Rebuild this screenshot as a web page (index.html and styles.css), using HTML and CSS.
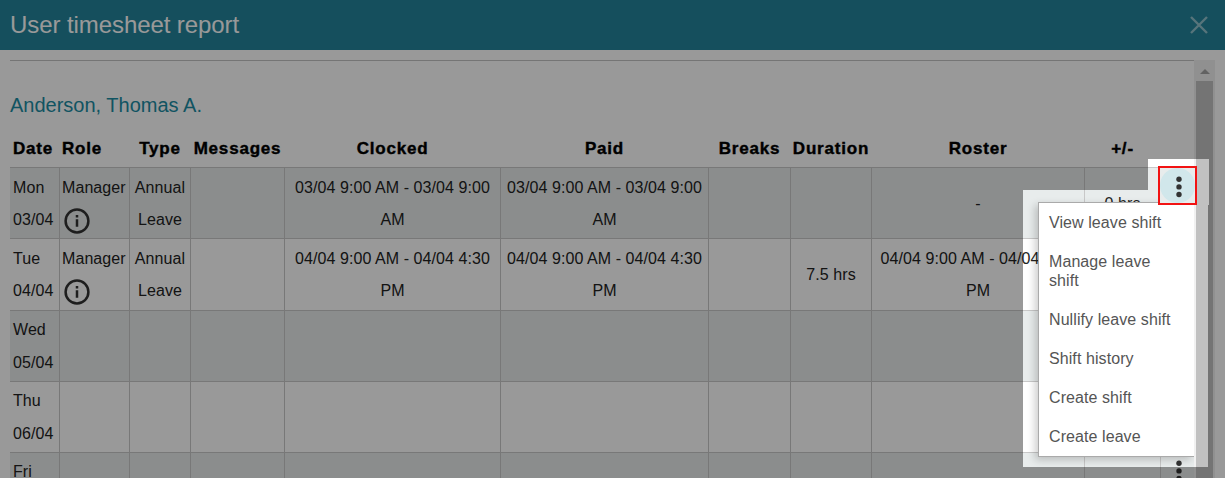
FILE: index.html
```
<!DOCTYPE html>
<html lang="en">
<head>
    <meta charset="UTF-8">
    <meta name="viewport" content="width=device-width, initial-scale=1.0">
    <title>User timesheet report</title>
    <link rel="stylesheet" href="styles.css">
</head>
<body>
    <header class="modal-header">
        <h1>User timesheet report</h1>
        <button class="close" aria-label="Close">
            <svg width="20" height="20" viewBox="0 0 20 20"><path d="M2 2L18 18M18 2L2 18"/></svg>
        </button>
    </header>
    <main class="modal-body">
        <div class="report">
            <h2>Anderson, Thomas A.</h2>
            <table>
                <colgroup>
                    <col class="c-date"><col class="c-role"><col class="c-type"><col class="c-messages">
                    <col class="c-clocked"><col class="c-paid"><col class="c-breaks"><col class="c-duration">
                    <col class="c-roster"><col class="c-diff"><col class="c-menu">
                </colgroup>
                <thead>
                    <tr>
                        <th class="left">Date</th>
                        <th class="left">Role</th>
                        <th>Type</th>
                        <th>Messages</th>
                        <th>Clocked</th>
                        <th>Paid</th>
                        <th>Breaks</th>
                        <th>Duration</th>
                        <th>Roster</th>
                        <th>+/-</th>
                        <th></th>
                    </tr>
                </thead>
                <tbody>
                    <tr>
                        <td class="left">Mon<br>03/04</td>
                        <td class="left">Manager<br><svg class="info" width="26" height="26" viewBox="0 0 26 26"><circle cx="13" cy="13" r="11.4"/><path d="M13 11.3V18.8M13 7V9.6"/></svg></td>
                        <td>Annual Leave</td>
                        <td></td>
                        <td>03/04 9:00 AM - 03/04 9:00 AM</td>
                        <td>03/04 9:00 AM - 03/04 9:00 AM</td>
                        <td></td>
                        <td></td>
                        <td>-</td>
                        <td>0 hrs</td>
                        <td class="actions">
                            <button class="more active" aria-label="Shift menu"><svg width="6" height="22" viewBox="0 0 6 22"><circle cx="3" cy="3.3" r="2.7"/><circle cx="3" cy="10.9" r="2.7"/><circle cx="3" cy="18.5" r="2.7"/></svg></button>
                            <ul class="menu">
                                <li>View leave shift</li>
                                <li>Manage leave shift</li>
                                <li>Nullify leave shift</li>
                                <li>Shift history</li>
                                <li>Create shift</li>
                                <li>Create leave</li>
                            </ul>
                        </td>
                    </tr>
                    <tr class="tall">
                        <td class="left">Tue<br>04/04</td>
                        <td class="left">Manager<br><svg class="info" width="26" height="26" viewBox="0 0 26 26"><circle cx="13" cy="13" r="11.4"/><path d="M13 11.3V18.8M13 7V9.6"/></svg></td>
                        <td>Annual Leave</td>
                        <td></td>
                        <td>04/04 9:00 AM - 04/04 4:30 PM</td>
                        <td>04/04 9:00 AM - 04/04 4:30 PM</td>
                        <td></td>
                        <td>7.5 hrs</td>
                        <td>04/04 9:00 AM - 04/04 4:30 PM</td>
                        <td></td>
                        <td></td>
                    </tr>
                    <tr class="empty">
                        <td class="left">Wed<br>05/04</td>
                        <td></td><td></td><td></td><td></td><td></td><td></td><td></td><td></td><td></td><td></td>
                    </tr>
                    <tr class="empty">
                        <td class="left">Thu<br>06/04</td>
                        <td></td><td></td><td></td><td></td><td></td><td></td><td></td><td></td><td></td><td></td>
                    </tr>
                    <tr class="empty">
                        <td class="left">Fri</td>
                        <td></td><td></td><td></td><td></td><td></td><td></td><td></td><td></td><td></td>
                        <td class="actions">
                            <button class="more" aria-label="Shift menu"><svg width="6" height="22" viewBox="0 0 6 22"><circle cx="3" cy="3.3" r="2.7"/><circle cx="3" cy="10.9" r="2.7"/><circle cx="3" cy="18.5" r="2.7"/></svg></button>
                        </td>
                    </tr>
                </tbody>
            </table>
        </div>
        <div class="scrollbar">
            <svg width="10" height="5" viewBox="0 0 10 5"><path d="M5 0L10 5H0Z"/></svg>
            <div class="thumb"></div>
        </div>
    </main>
    <div class="dim"></div>
</body>
</html>
```
FILE: styles.css
```
* {
    box-sizing: border-box;
}
body {
    margin: 0;
    height: 478px;
    overflow: hidden;
    display: flex;
    flex-direction: column;
    position: relative;
    background: #fff;
    color: #222;
    font: 16px/32px "Liberation Sans", Arial, sans-serif;
    letter-spacing: 0.08px;
}
button {
    padding: 0;
    border: none;
    background: none;
}
.modal-header {
    flex: none;
    height: 50px;
    padding: 0 16px 0 10px;
    display: flex;
    align-items: center;
    justify-content: space-between;
    background: #23849b;
    color: #fff;
}
.modal-header h1 {
    margin: 0;
    font-size: 24px;
    font-weight: normal;
    letter-spacing: -0.08px;
}
.close {
    height: 20px;
}
.close svg {
    display: block;
    fill: none;
    stroke: #91c1cd;
    stroke-width: 2.4;
}
.modal-body {
    flex: 1;
    min-height: 0;
    padding: 10px 10px 0;
    display: flex;
    overflow: hidden;
}
.report {
    width: 1184px;
    border-top: 1px solid #c4c4c4;
}
.report h2 {
    margin: 28px 0 11px;
    color: #1b8ca3;
    font-size: 20px;
    font-weight: normal;
    letter-spacing: 0;
}
table {
    width: 1184px;
    table-layout: fixed;
    border-spacing: 0;
}
.c-date { width: 49px; }
.c-role { width: 70px; }
.c-type { width: 61px; }
.c-messages { width: 94px; }
.c-clocked { width: 216px; }
.c-paid { width: 208px; }
.c-breaks { width: 82px; }
.c-duration { width: 81px; }
.c-roster { width: 213px; }
.c-diff { width: 76px; }
.c-menu { width: 34px; }
th {
    height: 35px;
    padding: 0 0 2px 1px;
    color: #000;
    font-size: 17px;
    letter-spacing: 0.8px;
    white-space: nowrap;
    -webkit-text-stroke: 0.4px #000;
}
td {
    height: 71px;
    padding: 4px 2px 2px;
    border-top: 1px solid #c8c8c8;
    border-left: 1px solid #c8c8c8;
    text-align: center;
}
td:first-child {
    border-left: none;
}
th.left,
td.left {
    padding-left: 3px;
    text-align: left;
}
td.left:nth-child(2) {
    padding-left: 2px;
    padding-right: 0;
}
tbody tr:nth-child(odd) {
    background: #e8ecec;
}
.tall td {
    height: 72px;
    padding-top: 4px;
    padding-bottom: 3px;
}
.empty td {
    padding-top: 2px;
    padding-bottom: 2px;
    line-height: 33px;
}
.empty td.left {
    vertical-align: top;
}
.info {
    display: block;
    margin: 4px 0 2px 2px;
    fill: none;
    stroke: #333;
    stroke-width: 2.5;
}
td.actions {
    position: relative;
    padding: 0;
    vertical-align: top;
}
.more {
    width: 36px;
    height: 36px;
    display: flex;
    align-items: center;
    justify-content: center;
    fill: #333;
}
.more.active {
    position: absolute;
    top: -2px;
    left: -3px;
    width: 39px;
    height: 39px;
    padding: 2px 0 0 2px;
    border: 2px solid #f21313;
    background: radial-gradient(circle, #d1e7eb 17px, #e8ecec 18px);
    z-index: 4;
}
/* drops below the three dot button, cut off by the scrollbar */
.menu {
    position: absolute;
    top: 34px;
    right: 0;
    width: 156px;
    height: 255px;
    margin: 0;
    padding: 0 20px 0 10px;
    list-style: none;
    border: 1px solid #aaa;
    border-right: none;
    background: #fff;
    box-shadow: -3px 3px 8px rgba(0, 0, 0, 0.2);
    color: #555;
    line-height: 19px;
    text-align: left;
    z-index: 1;
}
.menu li {
    padding: 10px 0;
}
.scrollbar {
    width: 21px;
    padding: 9px 2px 0;
    background: #f1f1f1;
    position: relative;
    z-index: 3;
}
.scrollbar svg {
    display: block;
    margin: 0 auto 7px;
    fill: #a3a3a3;
}
.thumb {
    height: 400px;
    background: #c1c1c1;
}
/* everything but the open menu and its button is darkened */
.dim {
    position: absolute;
    inset: 0;
    background: rgba(0, 0, 0, 0.4);
    clip-path: polygon(0 0, 1225px 0, 1225px 478px, 0 478px, 0 190px, 1023px 190px, 1023px 467px, 1208px 467px, 1208px 205px, 1209px 205px, 1209px 159px, 1148px 159px, 1148px 190px, 0 190px);
    z-index: 5;
}
```
